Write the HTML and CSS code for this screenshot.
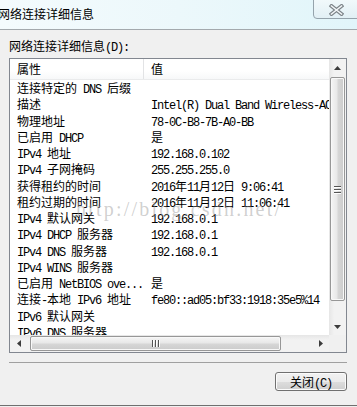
FILE: index.html
```html
<!DOCTYPE html>
<html lang="zh-CN">
<head>
<meta charset="utf-8">
<title>网络连接详细信息</title>
<link rel="stylesheet" href="styles.css">
</head>
<body>
<div class="window">
  <div class="titlebar">
    <span class="title">网络连接详细信息</span>
    <div class="close">
      <svg width="15" height="12" viewBox="0 0 15 12"><path d="M2.5 2 L12.5 10 M12.5 2 L2.5 10" stroke="#7d8489" stroke-width="3.8" stroke-linecap="square" fill="none"/><path d="M2.5 2 L12.5 10 M12.5 2 L2.5 10" stroke="#f4f7f9" stroke-width="1.6" stroke-linecap="square" fill="none"/></svg>
    </div>
  </div>
  <div class="client">
    <div class="label">网络连接详细信息<span class="m">(D):</span></div>
    <div class="listbox">
      <div class="viewport">
        <div class="header">
          <div class="hcell">属性</div>
          <div class="hcell">值</div>
        </div>
        <div class="rows">
          <div class="row"><div class="cell">连接特定的<span class="m"> DNS </span>后缀</div><div class="cell"></div></div>
          <div class="row"><div class="cell">描述</div><div class="cell"><span class="m">Intel(R) Dual Band Wireless-AC 3160</span></div></div>
          <div class="row"><div class="cell">物理地址</div><div class="cell"><span class="m">78-0C-B8-7B-A0-BB</span></div></div>
          <div class="row"><div class="cell">已启用<span class="m"> DHCP</span></div><div class="cell">是</div></div>
          <div class="row"><div class="cell"><span class="m">IPv4 </span>地址</div><div class="cell"><span class="m">192.168.0.102</span></div></div>
          <div class="row"><div class="cell"><span class="m">IPv4 </span>子网掩码</div><div class="cell"><span class="m">255.255.255.0</span></div></div>
          <div class="row"><div class="cell">获得租约的时间</div><div class="cell"><span class="m">2016</span>年<span class="m">11</span>月<span class="m">12</span>日<span class="m"> 9:06:41</span></div></div>
          <div class="row"><div class="cell">租约过期的时间</div><div class="cell"><span class="m">2016</span>年<span class="m">11</span>月<span class="m">12</span>日<span class="m"> 11:06:41</span></div></div>
          <div class="row"><div class="cell"><span class="m">IPv4 </span>默认网关</div><div class="cell"><span class="m">192.168.0.1</span></div></div>
          <div class="row"><div class="cell"><span class="m">IPv4 DHCP </span>服务器</div><div class="cell"><span class="m">192.168.0.1</span></div></div>
          <div class="row"><div class="cell"><span class="m">IPv4 DNS </span>服务器</div><div class="cell"><span class="m">192.168.0.1</span></div></div>
          <div class="row"><div class="cell"><span class="m">IPv4 WINS </span>服务器</div><div class="cell"></div></div>
          <div class="row"><div class="cell">已启用<span class="m"> NetBIOS ove...</span></div><div class="cell">是</div></div>
          <div class="row"><div class="cell">连接<span class="m">-</span>本地<span class="m"> IPv6 </span>地址</div><div class="cell"><span class="m">fe80::ad05:bf33:1918:35e5%14</span></div></div>
          <div class="row"><div class="cell"><span class="m">IPv6 </span>默认网关</div><div class="cell"></div></div>
          <div class="row"><div class="cell"><span class="m">IPv6 DNS </span>服务器</div><div class="cell"></div></div>
        </div>
      </div>
      <div class="vscroll">
        <div class="sbtn"><svg width="7" height="4" viewBox="0 0 7 4"><polygon points="0,4 7,4 3.5,0" fill="#3c3c3c"/></svg></div>
        <div class="vtrack">
          <div class="vthumb"><div class="grip-h"><i></i><i></i><i></i></div></div>
        </div>
        <div class="sbtn"><svg width="7" height="4" viewBox="0 0 7 4"><polygon points="0,0 7,0 3.5,4" fill="#3c3c3c"/></svg></div>
      </div>
      <div class="hscroll">
        <div class="sbtn"><svg width="4" height="7" viewBox="0 0 4 7"><polygon points="4,0 4,7 0,3.5" fill="#3c3c3c"/></svg></div>
        <div class="htrack">
          <div class="hthumb"><div class="grip-v"><i></i><i></i><i></i></div></div>
        </div>
        <div class="sbtn"><svg width="4" height="7" viewBox="0 0 4 7"><polygon points="0,0 0,7 4,3.5" fill="#3c3c3c"/></svg></div>
      </div>
      <div class="corner"></div>
      <div class="watermark">http://blog.csdn.net/</div>
    </div>
    <div class="sep"></div>
    <div class="buttons">
      <button class="btn">关闭<span class="m">(C)</span></button>
    </div>
  </div>
</div>
</body>
</html>
```
FILE: styles.css
```css
* { box-sizing: border-box; }
html, body { margin: 0; padding: 0; }
body {
  width: 357px;
  height: 407px;
  overflow: hidden;
  background: #f0f0f0;
  font-family: "Noto Sans CJK SC", sans-serif;
  font-size: 12px;
  color: #000;
}
.m {
  font-family: "Liberation Mono", "Noto Sans CJK SC", monospace;
  font-size: 12px;
  letter-spacing: -1.2px;
}
.window {
  height: 406px;
  display: flex;
  flex-direction: column;
  background: #f0f0f0;
  border-bottom: 1px solid #6f6f6f;
}
.titlebar {
  height: 30px;
  flex: none;
  display: flex;
  justify-content: space-between;
  align-items: flex-start;
  border-bottom: 1px solid #a3a9ad;
  background: linear-gradient(90deg, #f4fbfd 0%, #ecf8fb 50%, #e1f5fa 100%);
  overflow: hidden;
}
.title {
  margin-left: -2px;
  margin-top: 6px;
  line-height: 16px;
  white-space: nowrap;
}
.close {
  margin-top: -1px;
  margin-right: -5px;
  width: 49px;
  height: 20px;
  border: 1px solid #95a3ac;
  border-radius: 0 0 4px 4px;
  background: linear-gradient(#f1f9fb, #e2f0f5);
  display: flex;
  align-items: center;
  padding-left: 15px;
  padding-top: 1px;
}
.client {
  flex: 1;
  padding: 8px 0 0 9px;
  display: flex;
  flex-direction: column;
}
.label {
  line-height: 16px;
  height: 16px;
  white-space: nowrap;
}
.listbox {
  position: relative;
  margin-top: 4px;
  width: 338px;
  height: 295px;
  border: 1px solid #828790;
  background: #fff;
  display: grid;
  grid-template-columns: 1fr 17px;
  grid-template-rows: 1fr 17px;
}
.viewport {
  overflow: hidden;
  white-space: nowrap;
}
.header {
  height: 21px;
  display: grid;
  grid-template-columns: 134px 1fr;
  background: linear-gradient(#ffffff 0%, #ffffff 60%, #f7f8f9 100%);
  border-bottom: 1px solid #eaebec;
}
.hcell {
  padding-left: 7px;
  line-height: 20px;
}
.hcell:first-child {
  border-right: 1px solid #e2e3e5;
}
.row {
  height: 16.25px;
  line-height: 16.25px;
  display: grid;
  grid-template-columns: 134px 1fr;
}
.cell {
  padding-left: 7px;
  overflow: visible;
}
.cell:first-child { overflow: hidden; }
.vscroll {
  display: flex;
  flex-direction: column;
  background: linear-gradient(90deg, #e6e6e6 0%, #f2f2f2 30%, #f2f2f2 100%);
}
.sbtn {
  width: 17px;
  height: 17px;
  flex: none;
  display: flex;
  align-items: center;
  justify-content: center;
}
.vtrack { flex: 1; padding: 1px 1px 0 1px; }
.vthumb {
  height: 224px;
  border: 1px solid #979797;
  border-radius: 2px;
  background: linear-gradient(90deg, #f5f5f5 0%, #e8e8e8 45%, #d6d6d6 55%, #cbcbcb 100%);
  box-shadow: inset 0 0 0 1px #f8f8f8;
  display: flex;
  align-items: center;
  justify-content: center;
}
.grip-h { display: flex; flex-direction: column; gap: 2px; }
.grip-h i { display: block; width: 7px; height: 1px; background: #555; box-shadow: 0 1px 0 #fff; }
.hscroll {
  display: flex;
  background: linear-gradient(#e6e6e6 0%, #f2f2f2 30%, #f2f2f2 100%);
}
.htrack { flex: 1; padding: 1px 0 1px 3px; }
.hthumb {
  width: 251px;
  height: 15px;
  border: 1px solid #979797;
  border-radius: 2px;
  background: linear-gradient(#f5f5f5 0%, #e8e8e8 45%, #d6d6d6 55%, #cbcbcb 100%);
  box-shadow: inset 0 0 0 1px #f8f8f8;
  display: flex;
  align-items: center;
  justify-content: center;
}
.grip-v { display: flex; gap: 2px; }
.grip-v i { display: block; width: 1px; height: 7px; background: #555; box-shadow: 1px 0 0 #fff; }
.corner { background: #f0f0f0; }
.watermark {
  position: absolute;
  left: 66px;
  top: 140px;
  font-family: "Liberation Serif", serif;
  font-size: 20px;
  letter-spacing: 2.2px;
  line-height: 20px;
  color: rgba(150, 150, 150, 0.45);
  white-space: nowrap;
  pointer-events: none;
}
.sep {
  margin-top: 9px;
  width: 338px;
  height: 1px;
  background: #a0a0a0;
}
.buttons {
  margin-top: 9px;
  width: 338px;
  display: flex;
  justify-content: flex-end;
}
.btn {
  width: 72px;
  height: 19px;
  padding: 0;
  border: 1px solid #707070;
  border-radius: 3px;
  background: linear-gradient(#f2f2f2 0%, #ebebeb 50%, #dddddd 51%, #cfcfcf 100%);
  box-shadow: inset 0 0 0 1px #fbfbfb;
  font-family: "Noto Sans CJK SC", sans-serif;
  font-size: 12px;
  line-height: 17px;
  color: #000;
}
```
